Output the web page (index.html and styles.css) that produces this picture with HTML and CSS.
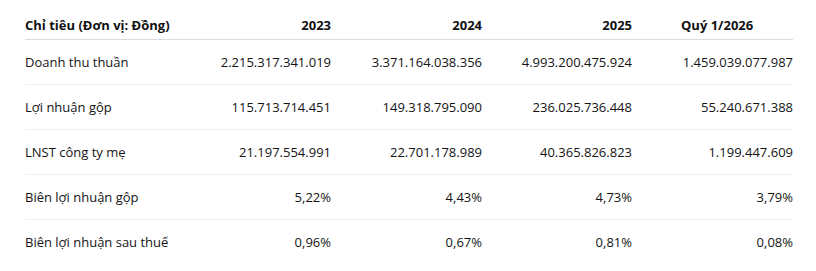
FILE: index.html
```html
<!DOCTYPE html>
<html lang="vi">
<head>
<meta charset="utf-8">
<link rel="stylesheet" href="styles.css">
</head>
<body>
<div class="wrap">
<table class="fin">
<colgroup>
<col class="c1"><col class="c2"><col class="c3"><col class="c4"><col class="c5">
</colgroup>
<thead>
<tr>
<th class="lbl">Chỉ tiêu (Đơn vị: Đồng)</th>
<th class="num">2023</th>
<th class="num">2024</th>
<th class="num">2025</th>
<th class="last">Quý 1/2026</th>
</tr>
</thead>
<tbody>
<tr><td class="lbl">Doanh thu thuần</td><td class="num">2.215.317.341.019</td><td class="num">3.371.164.038.356</td><td class="num">4.993.200.475.924</td><td class="num">1.459.039.077.987</td></tr>
<tr><td class="lbl">Lợi nhuận gộp</td><td class="num">115.713.714.451</td><td class="num">149.318.795.090</td><td class="num">236.025.736.448</td><td class="num">55.240.671.388</td></tr>
<tr><td class="lbl">LNST công ty mẹ</td><td class="num">21.197.554.991</td><td class="num">22.701.178.989</td><td class="num">40.365.826.823</td><td class="num">1.199.447.609</td></tr>
<tr><td class="lbl">Biên lợi nhuận gộp</td><td class="num">5,22%</td><td class="num">4,43%</td><td class="num">4,73%</td><td class="num">3,79%</td></tr>
<tr><td class="lbl">Biên lợi nhuận sau thuế</td><td class="num">0,96%</td><td class="num">0,67%</td><td class="num">0,81%</td><td class="num">0,08%</td></tr>
</tbody>
</table>
</div>
</body>
</html>
```
FILE: styles.css
```css
html, body {
  margin: 0;
  padding: 0;
  background: #ffffff;
}
body {
  font-family: "Open Sans", "Noto Sans", sans-serif;
  font-size: 13px;
  color: #141414;
}
.wrap {
  padding: 15px 23px 0 25px;
}
.fin {
  width: 768px;
  border-collapse: collapse;
  table-layout: fixed;
}
.c1 { width: 156px; }
.c2 { width: 150px; }
.c3 { width: 151px; }
.c4 { width: 150px; }
.c5 { width: 161px; }
th, td {
  padding: 0;
  line-height: 20px;
  white-space: nowrap;
}
th {
  font-weight: 700;
  padding-bottom: 4px;
  border-bottom: 1px solid #dcdcdc;
  color: #111111;
}
td {
  padding-top: 12px;
  padding-bottom: 12px;
  border-bottom: 1px solid #f0f0f0;
}
tbody tr:last-child td {
  border-bottom: none;
}
.lbl { text-align: left; }
.num { text-align: right; }
.last { text-align: left; padding-left: 49px; }
```
